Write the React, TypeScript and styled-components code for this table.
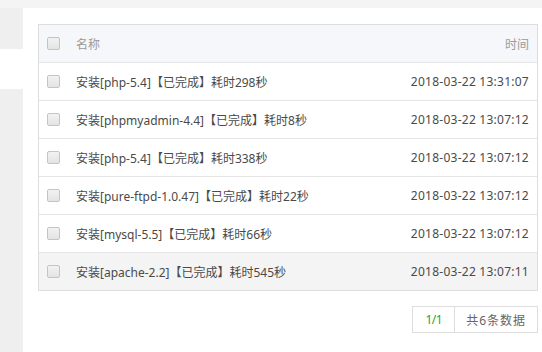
import styled, { createGlobalStyle } from "styled-components";

const GlobalStyle = createGlobalStyle`
  html, body {
    margin: 0;
    padding: 0;
    background: #fff;
  }
  body {
    font-family: "Noto Sans", "Noto Sans CJK SC", sans-serif;
    font-size: 12px;
    color: #4a4a4a;
  }
`;

const Page = styled.div`
  display: flex;
  flex-direction: column;
  width: 542px;
  height: 352px;
  overflow: hidden;
`;
const TopStrip = styled.div`
  height: 8px;
  background: #f4f4f4;
  flex-shrink: 0;
`;
const Body = styled.div`
  display: flex;
  flex: 1;
`;
const Sidebar = styled.div`
  width: 23px;
  display: flex;
  flex-direction: column;
  flex-shrink: 0;
`;
const SideItem = styled.div<{ $active?: boolean; $grow?: boolean }>`
  height: ${(p) => (p.$grow ? "auto" : "40px")};
  flex: ${(p) => (p.$grow ? 1 : "none")};
  background: ${(p) => (p.$active ? "#fff" : "#efefef")};
  &:first-child {
    height: 41px;
  }
`;
const Content = styled.div`
  flex: 1;
  padding: 16px 4px 0 15px;
  display: flex;
  flex-direction: column;
`;
const Table = styled.div`
  border: 1px solid #ddd;
  width: 498px;
`;
const Row = styled.div<{ $head?: boolean; $hover?: boolean }>`
  display: flex;
  align-items: center;
  height: 37px;
  padding: 0 8px 0 8px;
  background: ${(p) => (p.$head ? "#f6f7fa" : p.$hover ? "#f4f4f4" : "#fff")};
  color: ${(p) => (p.$head ? "#9a9a9a" : "#4a4a4a")};
  border-bottom: 1px solid #e6e6e6;
  &:last-child {
    border-bottom: none;
  }
`;
const Check = styled.span`
  width: 11px;
  height: 11px;
  border: 1px solid #c4c4c4;
  border-radius: 2px;
  background: linear-gradient(#f2f2f2, #e4e4e4);
  margin-right: 16px;
  flex-shrink: 0;
`;
const Name = styled.span`
  flex: 1;
`;
const Time = styled.span`
  letter-spacing: 0.25px;
`;
const HeadTime = styled.span`
  color: #9a9a9a;
`;
const Pager = styled.div`
  display: flex;
  align-self: flex-end;
  margin-top: 15px;
  border: 1px solid #ddd;
  height: 25px;
`;
const PageItem = styled.span<{ $current?: boolean }>`
  display: flex;
  align-items: center;
  justify-content: center;
  padding: 0 ${(p) => (p.$current ? "12px" : "11px")};
  color: ${(p) => (p.$current ? "#20a53a" : "#666")};
  letter-spacing: ${(p) => (p.$current ? "-0.5px" : "1px")};
  font-size: 12px;
  & + & {
    border-left: 1px solid #ddd;
  }
`;

const logs = [
  { name: "安装[php-5.4]【已完成】耗时298秒", time: "2018-03-22 13:31:07" },
  { name: "安装[phpmyadmin-4.4]【已完成】耗时8秒", time: "2018-03-22 13:07:12" },
  { name: "安装[php-5.4]【已完成】耗时338秒", time: "2018-03-22 13:07:12" },
  { name: "安装[pure-ftpd-1.0.47]【已完成】耗时22秒", time: "2018-03-22 13:07:12" },
  { name: "安装[mysql-5.5]【已完成】耗时66秒", time: "2018-03-22 13:07:12" },
  { name: "安装[apache-2.2]【已完成】耗时545秒", time: "2018-03-22 13:07:11" },
];

export default function App() {
  return (
    <Page>
      <GlobalStyle />
      <TopStrip />
      <Body>
        <Sidebar>
          <SideItem />
          <SideItem $active />
          <SideItem $grow />
        </Sidebar>
        <Content>
          <Table>
            <Row $head>
              <Check />
              <Name>名称</Name>
              <HeadTime>时间</HeadTime>
            </Row>
            {logs.map((log, i) => (
              <Row key={i} $hover={i === logs.length - 1}>
                <Check />
                <Name>{log.name}</Name>
                <Time>{log.time}</Time>
              </Row>
            ))}
          </Table>
          <Pager>
            <PageItem $current>1/1</PageItem>
            <PageItem>共6条数据</PageItem>
          </Pager>
        </Content>
      </Body>
    </Page>
  );
}
